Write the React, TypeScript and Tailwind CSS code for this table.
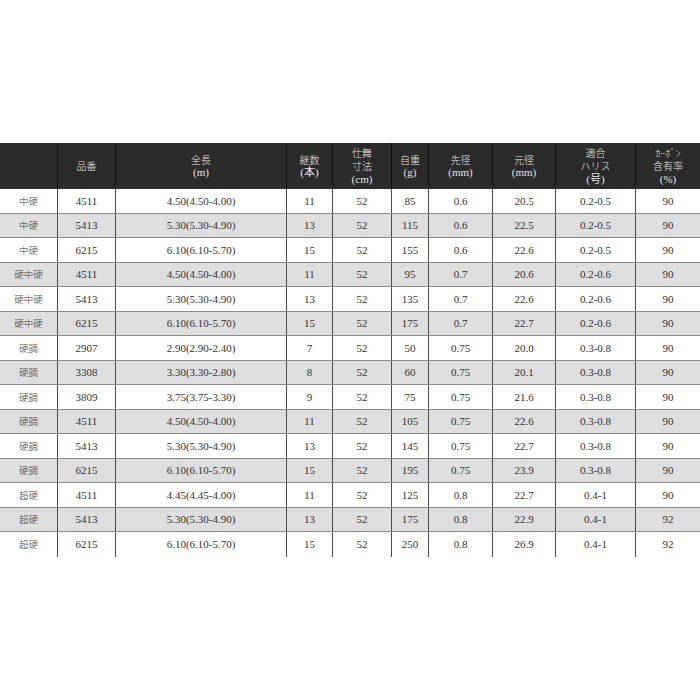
const cols = "grid-cols-[58px_58px_171px_46px_59px_37px_64px_63px_80px_64px]";

const headers: string[][] = [
  [],
  ["品番"],
  ["全長", "(m)"],
  ["継数", "(本)"],
  ["仕舞", "寸法", "(cm)"],
  ["自重", "(g)"],
  ["先径", "(mm)"],
  ["元径", "(mm)"],
  ["適合", "ハリス", "(号)"],
  ["ｶｰﾎﾞﾝ", "含有率", "(%)"],
];

const rows: string[][] = [
  ["中硬", "4511", "4.50(4.50-4.00)", "11", "52", "85", "0.6", "20.5", "0.2-0.5", "90"],
  ["中硬", "5413", "5.30(5.30-4.90)", "13", "52", "115", "0.6", "22.5", "0.2-0.5", "90"],
  ["中硬", "6215", "6.10(6.10-5.70)", "15", "52", "155", "0.6", "22.6", "0.2-0.5", "90"],
  ["硬中硬", "4511", "4.50(4.50-4.00)", "11", "52", "95", "0.7", "20.6", "0.2-0.6", "90"],
  ["硬中硬", "5413", "5.30(5.30-4.90)", "13", "52", "135", "0.7", "22.6", "0.2-0.6", "90"],
  ["硬中硬", "6215", "6.10(6.10-5.70)", "15", "52", "175", "0.7", "22.7", "0.2-0.6", "90"],
  ["硬調", "2907", "2.90(2.90-2.40)", "7", "52", "50", "0.75", "20.0", "0.3-0.8", "90"],
  ["硬調", "3308", "3.30(3.30-2.80)", "8", "52", "60", "0.75", "20.1", "0.3-0.8", "90"],
  ["硬調", "3809", "3.75(3.75-3.30)", "9", "52", "75", "0.75", "21.6", "0.3-0.8", "90"],
  ["硬調", "4511", "4.50(4.50-4.00)", "11", "52", "105", "0.75", "22.6", "0.3-0.8", "90"],
  ["硬調", "5413", "5.30(5.30-4.90)", "13", "52", "145", "0.75", "22.7", "0.3-0.8", "90"],
  ["硬調", "6215", "6.10(6.10-5.70)", "15", "52", "195", "0.75", "23.9", "0.3-0.8", "90"],
  ["超硬", "4511", "4.45(4.45-4.00)", "11", "52", "125", "0.8", "22.7", "0.4-1", "90"],
  ["超硬", "5413", "5.30(5.30-4.90)", "13", "52", "175", "0.8", "22.9", "0.4-1", "92"],
  ["超硬", "6215", "6.10(6.10-5.70)", "15", "52", "250", "0.8", "26.9", "0.4-1", "92"],
];

export default function App() {
  return (
    <div className="w-[700px] h-[700px] bg-white pt-[143px]">
      {/* header */}
      <div className={`grid ${cols} h-[46px] bg-[#2b2b2b] text-[#e4e4e4] leading-[13.5px]`}>
        {headers.map((lines, i) => (
          <div
            key={i}
            className={`flex flex-col items-center justify-center ${i < headers.length - 1 ? "border-r border-[#111]" : ""}`}
          >
            {lines.map((l, j) => (
              <span
                key={j}
                className={
                  l.startsWith("(")
                    ? "text-[11px] font-['Liberation_Serif','Noto_Sans_CJK_JP',serif]"
                    : "text-[10px] font-light font-['Noto_Sans_CJK_JP',sans-serif]"
                }
              >
                {l}
              </span>
            ))}
          </div>
        ))}
      </div>

      {/* body */}
      {rows.map((row, r) => (
        <div
          key={r}
          className={`grid ${cols} h-[24.5px] text-[11px] text-[#333] ${r % 2 === 1 ? "bg-[#dedede]" : "bg-white"} ${r < rows.length - 1 ? "border-b border-[#8a8a8a]" : ""}`}
        >
          {row.map((cell, c) => (
            <div
              key={c}
              className={`flex items-center justify-center ${c < row.length - 1 ? "border-r border-[#4a4a4a]" : ""} ${c === 0 ? "font-['Noto_Sans_CJK_JP',sans-serif] text-[9.5px] font-light text-[#444]" : "font-['Liberation_Serif',serif]"}`}
            >
              {cell}
            </div>
          ))}
        </div>
      ))}
    </div>
  );
}
